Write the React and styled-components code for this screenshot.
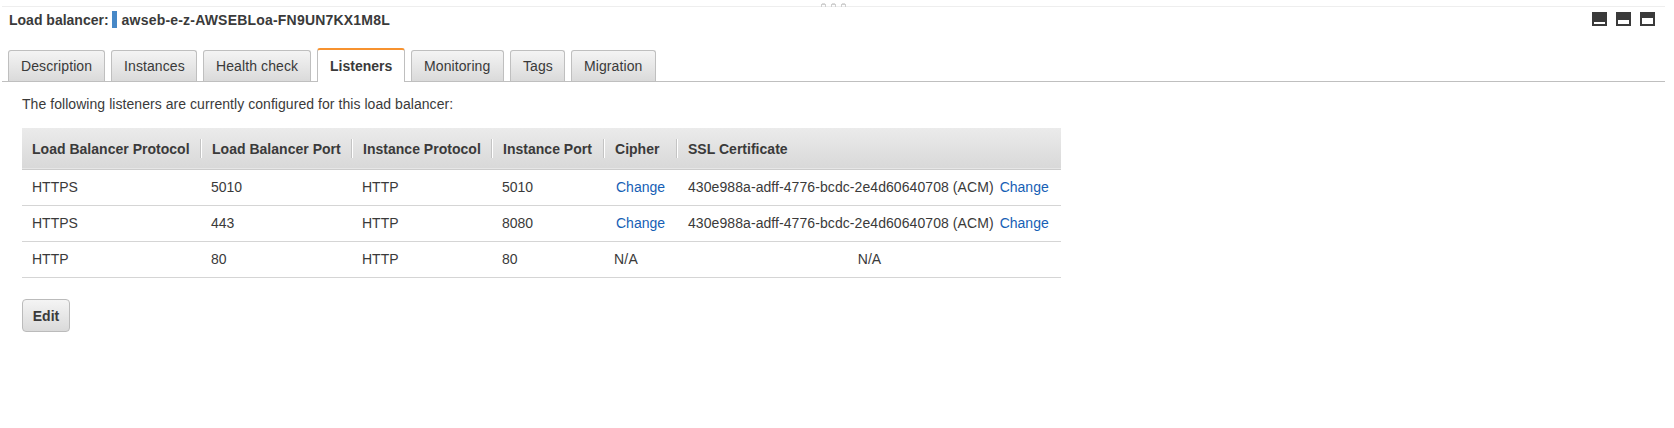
import React from 'react';
import styled, { createGlobalStyle, css } from 'styled-components';

const GlobalStyle = createGlobalStyle`
  * { box-sizing: border-box; }
  body {
    margin: 0;
    background: #fff;
    color: #3a3a3a;
    font: 14px/18px "Liberation Sans", Helvetica, Arial, sans-serif;
  }
`;

const Panel = styled.main`
  width: 1674px;
  height: 428px;
  padding: 3px 9px 0 2px;
  overflow: hidden;
`;

const Splitter = styled.div`
  display: flex;
  justify-content: center;
  gap: 5px;
  height: 4px;
  padding-right: 1px;
  border-bottom: 1px solid #eee;
`;

const Grip = styled.svg`
  display: block;
  flex: none;
`;

const TitleBar = styled.header`
  display: flex;
  align-items: flex-start;
  height: 41px;
  padding: 4px 10px 0 7px;
  font-weight: bold;
`;

const TitleLabel = styled.span`
  letter-spacing: ${(p) => p.$spacing || '0'};
  white-space: nowrap;
`;

const Marker = styled.span`
  width: 5px;
  height: 17px;
  margin: 0 5px 0 3px;
  background: #4788c7;
`;

const WindowButtons = styled.div`
  display: flex;
  gap: 9px;
  margin: 1px 0 0 auto;
`;

const TabList = styled.nav`
  display: flex;
  align-items: flex-end;
  gap: 6px;
  height: 34px;
  padding-left: 6px;
  border-bottom: 1px solid #bfbfbf;
`;

const Tab = styled.a`
  width: ${(p) => p.$width}px;
  height: 31px;
  padding: 6px 0 0 12px;
  border: 1px solid #bfbfbf;
  border-bottom: 0;
  border-radius: 3px 3px 0 0;
  background: linear-gradient(#f4f4f4, #dadada);
  letter-spacing: 0.1px;
  white-space: nowrap;
  ${(p) => p.$active && css`
    height: 34px;
    margin-bottom: -1px;
    padding-top: 7px;
    border-top: 2px solid #f7922f;
    background: #fff;
    font-weight: bold;
    letter-spacing: 0;
  `}
`;

const Content = styled.section`
  padding: 13px 0 0 20px;
`;

const Intro = styled.p`
  margin: 0 0 15px;
  letter-spacing: 0.055px;
`;

const Table = styled.div`
  width: 1039px;
`;

const Row = styled.div`
  display: grid;
  grid-template-columns: 180px 151px 140px 112px 73px 383px;
  height: 36px;
  align-items: center;
  padding-bottom: 2px;
  border-bottom: 1px solid #d5d5d5;
`;

const HeaderRow = styled(Row)`
  height: 42px;
  padding-bottom: 0;
  background: linear-gradient(#ebebeb, #d8d8d8);
  border-bottom-color: #ccc;
  box-shadow: inset 0 -1px #e6e6e6;
  font-weight: bold;
`;

const HeaderCell = styled.div`
  height: 19px;
  padding: 1px 0 0 10px;
  border-right: 1px solid #fff;
  box-shadow: inset -1px 0 #c4c4c4;
  letter-spacing: 0.02px;
  white-space: nowrap;
  &:last-child { border: 0; box-shadow: none; }
`;

const Cell = styled.div`
  padding-left: ${(p) => p.$inset ?? 9}px;
  letter-spacing: ${(p) => p.$spacing || '0'};
  text-align: ${(p) => (p.$center ? 'center' : 'left')};
  white-space: nowrap;
`;

const Link = styled.a`
  margin-left: ${(p) => p.$gap || 0}px;
  letter-spacing: 0;
  color: #1660b5;
`;

const EditButton = styled.button`
  display: block;
  width: 48px;
  height: 33px;
  margin-top: 21px;
  padding: 0;
  border: 1px solid #bbb;
  border-radius: 4px;
  background: linear-gradient(#f4f4f4, #dadada);
  color: #3a3a3a;
  font: bold 14px/18px "Liberation Sans", Helvetica, Arial, sans-serif;
`;

const tabs = [
  ['Description', 97], ['Instances', 86], ['Health check', 108], ['Listeners', 88],
  ['Monitoring', 93], ['Tags', 55], ['Migration', 85],
];
const columns = ['Load Balancer Protocol', 'Load Balancer Port', 'Instance Protocol', 'Instance Port', 'Cipher', 'SSL Certificate'];
const certificate = '430e988a-adff-4776-bcdc-2e4d60640708 (ACM)';
const listeners = [
  { protocol: 'HTTPS', port: '5010', instance: 'HTTP', instancePort: '5010', secure: true },
  { protocol: 'HTTPS', port: '443', instance: 'HTTP', instancePort: '8080', secure: true },
  { protocol: 'HTTP', port: '80', instance: 'HTTP', instancePort: '80', secure: false },
];

function WindowIcon({ paneHeight }) {
  return (
    <svg width="15" height="14" shapeRendering="crispEdges">
      <path fill="#3a3a3a" d="M0 0h15v14H0z" />
      <path fill="#fff" d={`M2 12h11v-${paneHeight}H2z`} />
    </svg>
  );
}

export default function App() {
  return (
    <>
      <GlobalStyle />
      <Panel>
        <Splitter>
          {[0, 1, 2].map((n) => (
            <Grip key={n} width="5" height="4" shapeRendering="crispEdges">
              <path fill="#ddd" d="M1 0h3v1H1z" />
              <path fill="#c4c4c4" d="M0 1h1v3H0zM4 1h1v3H4zM1 1h3v1H1z" opacity=".8" />
            </Grip>
          ))}
        </Splitter>
        <TitleBar>
          <TitleLabel>Load balancer:</TitleLabel>
          <Marker />
          <TitleLabel $spacing="0.2px">awseb-e-z-AWSEBLoa-FN9UN7KX1M8L</TitleLabel>
          <WindowButtons>
            {[2, 4, 6].map((h) => <WindowIcon key={h} paneHeight={h} />)}
          </WindowButtons>
        </TitleBar>
        <TabList>
          {tabs.map(([label, width]) => (
            <Tab key={label} $width={width} $active={label === 'Listeners'}>{label}</Tab>
          ))}
        </TabList>
        <Content>
          <Intro>The following listeners are currently configured for this load balancer:</Intro>
          <Table>
            <HeaderRow>
              {columns.map((c) => <HeaderCell key={c}>{c}</HeaderCell>)}
            </HeaderRow>
            {listeners.map((l) => (
              <Row key={l.port}>
                <Cell $inset={10}>{l.protocol}</Cell>
                <Cell>{l.port}</Cell>
                <Cell>{l.instance}</Cell>
                <Cell>{l.instancePort}</Cell>
                {l.secure ? (
                  <>
                    <Cell $inset={11}><Link>Change</Link></Cell>
                    <Cell $inset={10} $spacing="0.075px">{certificate}<Link $gap={6}>Change</Link></Cell>
                  </>
                ) : (
                  <>
                    <Cell $spacing="0.2px">N/A</Cell>
                    <Cell $center $inset={0}>N/A</Cell>
                  </>
                )}
              </Row>
            ))}
          </Table>
          <EditButton>Edit</EditButton>
        </Content>
      </Panel>
    </>
  );
}
